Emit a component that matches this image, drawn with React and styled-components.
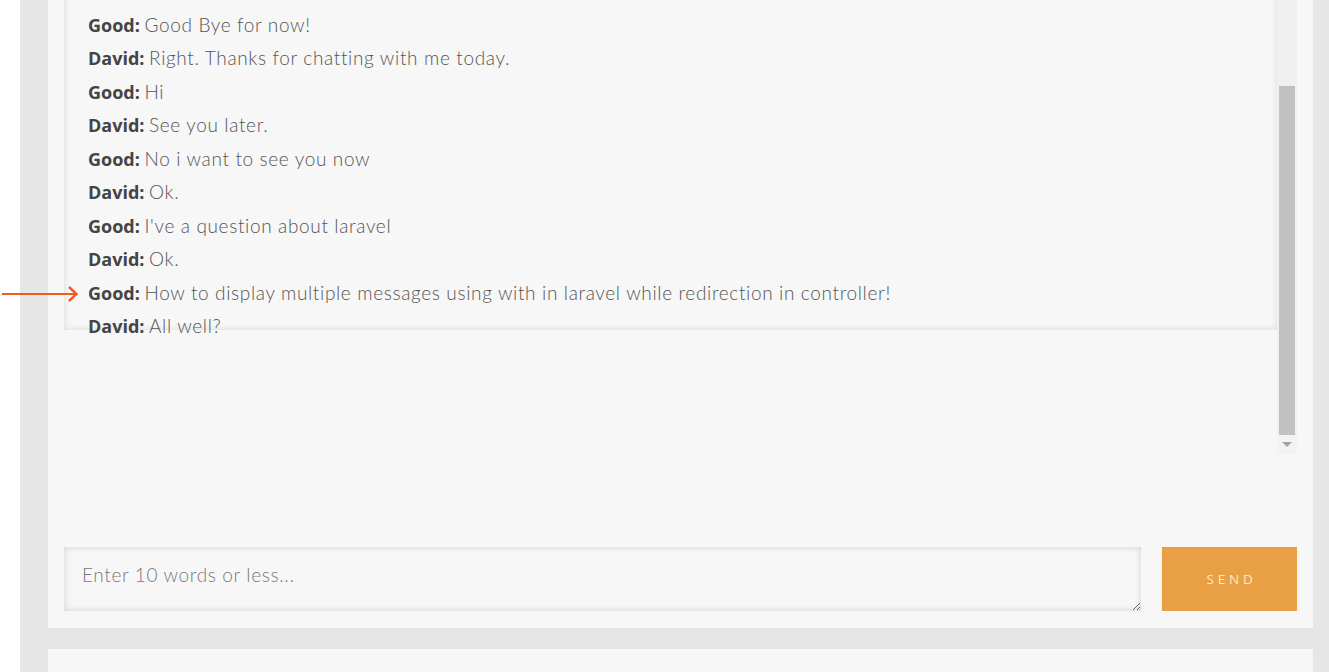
import React from "react";
import styled, { createGlobalStyle } from "styled-components";

const Global = createGlobalStyle`
  html, body { margin: 0; padding: 0; background: #ffffff; overflow: hidden; }
  body { font-family: "Lato", "Open Sans", sans-serif; }
`;

const Page = styled.div`
  position: relative;
  height: 672px;
  padding-left: 20px;
  overflow: hidden;
`;

const Backdrop = styled.div`
  height: 100%;
  background: #e6e6e6;
  padding: 0 16px 0 28px;
  display: flex;
  flex-direction: column;
  gap: 21px;
`;

const Panel = styled.section`
  background: #f7f7f7;
  padding: 0 16px ${(p) => (p.$bottom ? p.$bottom : 0)}px;
  flex: ${(p) => (p.$grow ? 1 : "none")};
`;

const ChatArea = styled.div`
  display: flex;
  height: 454px;
`;

const ChatColumn = styled.div`
  flex: 1;
  overflow: hidden;
`;

const MessageBox = styled.div`
  margin-top: -30px;
  height: 360px;
  box-sizing: border-box;
  padding: 37.5px 0 0 24px;
  box-shadow: inset 0 0 7px rgba(0, 0, 0, 0.12);
`;

const Line = styled.div`
  height: 33.5px;
  line-height: 33.5px;
  font-size: 18px;
  white-space: nowrap;
  color: #555;
`;

const Name = styled.span`
  font-family: "Open Sans", sans-serif;
  font-weight: 700;
  color: #444;
`;

const Text = styled.span`
  font-family: "Lato", sans-serif;
  font-weight: 300;
  font-size: 19px;
  letter-spacing: 0.65px;
  color: #555;
`;

const Scrollbar = styled.div`
  width: 20px;
  background: #f0f0f0;
  display: flex;
  flex-direction: column;
  align-items: center;
`;

const Thumb = styled.div`
  margin-top: 86px;
  width: 16px;
  height: 349px;
  background: #c1c1c1;
`;

const ArrowButton = styled.div`
  flex: 1;
  align-self: stretch;
  background: #f3f3f3;
  display: flex;
  align-items: center;
  justify-content: center;
`;

const Triangle = styled.div`
  width: 0;
  height: 0;
  border-left: 5px solid transparent;
  border-right: 5px solid transparent;
  border-top: 5px solid #a3a3a3;
`;

const Composer = styled.div`
  margin-top: 93px;
  display: flex;
  gap: 21px;
  height: 64px;
`;

const Input = styled.textarea`
  flex: 1;
  box-sizing: border-box;
  height: 64px;
  border: none;
  outline: none;
  background: #f7f7f7;
  box-shadow: inset 0 0 7px rgba(0, 0, 0, 0.16);
  padding: 17px 18px;
  font-family: "Lato", sans-serif;
  font-weight: 300;
  font-size: 19px;
  letter-spacing: 0.65px;
  line-height: 22px;
  color: #555;
  &::placeholder {
    color: #777;
  }
`;

const SendButton = styled.button`
  width: 135px;
  height: 64px;
  border: none;
  background: #e9a045;
  color: #fde7c3;
  font-family: "Open Sans", sans-serif;
  font-size: 13.5px;
  letter-spacing: 3.8px;
  padding: 0 0 0 4px;
  cursor: pointer;
`;

const Pointer = styled.svg`
  position: absolute;
  left: 0;
  top: 286px;
`;

const messages = [
  ["Good", "Good Bye for now!"],
  ["David", "Right. Thanks for chatting with me today."],
  ["Good", "Hi"],
  ["David", "See you later."],
  ["Good", "No i want to see you now"],
  ["David", "Ok."],
  ["Good", "I've a question about laravel"],
  ["David", "Ok."],
  ["Good", "How to display multiple messages using with in laravel while redirection in controller!"],
  ["David", "All well?"],
];

export default function App() {
  return (
    <>
      <Global />
      <Page>
        <Backdrop>
          <Panel $bottom={17}>
            <ChatArea>
              <ChatColumn>
                <MessageBox>
                  {messages.map(([who, text], i) => (
                    <Line key={i}>
                      <Name>{who}:</Name> <Text>{text}</Text>
                    </Line>
                  ))}
                </MessageBox>
              </ChatColumn>
              <Scrollbar>
                <Thumb />
                <ArrowButton>
                  <Triangle />
                </ArrowButton>
              </Scrollbar>
            </ChatArea>
            <Composer>
              <Input placeholder="Enter 10 words or less..." />
              <SendButton>SEND</SendButton>
            </Composer>
          </Panel>
          <Panel $grow />
        </Backdrop>
        <Pointer width="80" height="16" viewBox="0 0 80 16">
          <line x1="2" y1="8" x2="76" y2="8" stroke="#f15a22" strokeWidth="2.2" />
          <polyline
            points="69,1 76.5,8 69,15"
            fill="none"
            stroke="#f15a22"
            strokeWidth="2.4"
            strokeLinejoin="miter"
          />
        </Pointer>
      </Page>
    </>
  );
}
